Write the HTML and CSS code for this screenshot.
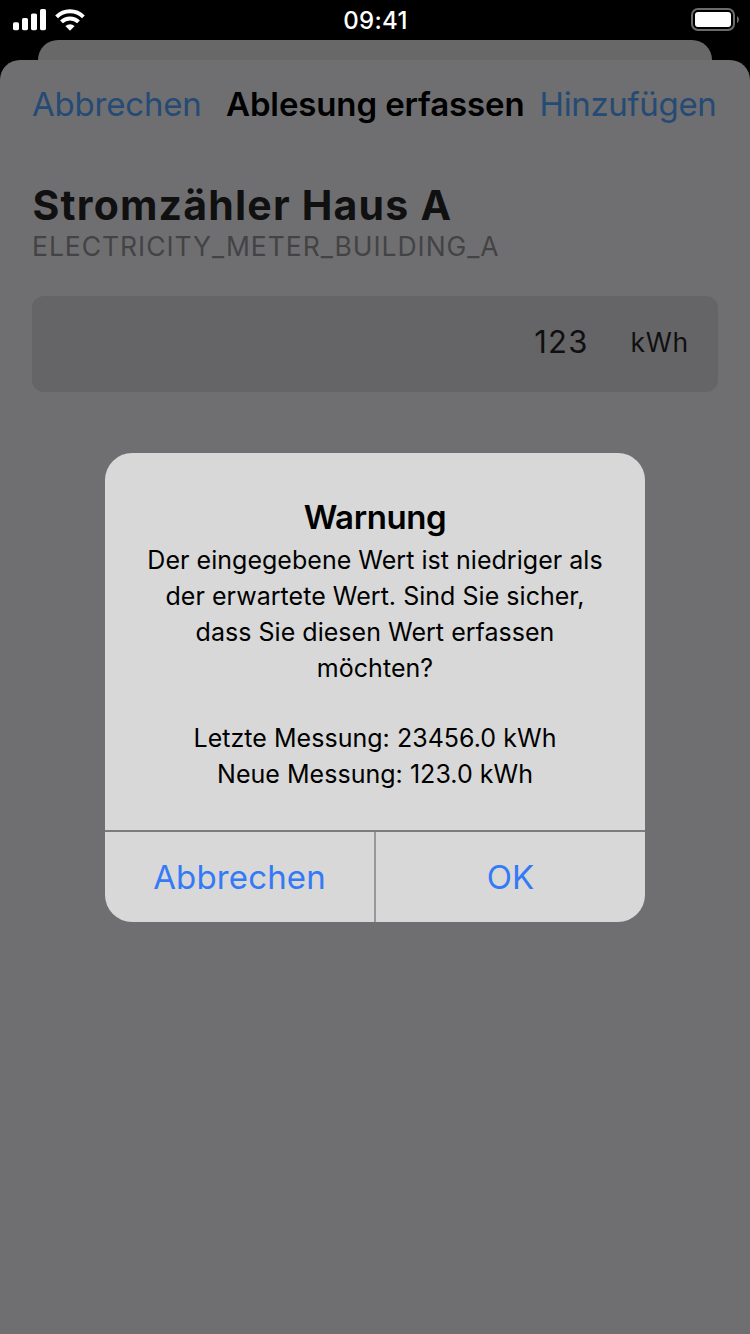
FILE: index.html
```html
<!DOCTYPE html>
<html lang="de">
<head>
<meta charset="utf-8">
<title>Ablesung erfassen</title>
<link rel="stylesheet" href="styles.css">
</head>
<body>
<div class="screen">
  <header class="status">
    <div class="status-left">
      <svg class="signal" width="34" height="22" viewBox="0 0 34 22" fill="#fff">
        <rect x="0" y="13.2" width="6" height="8" rx="1.6"/>
        <rect x="9" y="9" width="6" height="12.2" rx="1.6"/>
        <rect x="18" y="4.4" width="6" height="16.8" rx="1.6"/>
        <rect x="27" y="0" width="6" height="21.2" rx="1.6"/>
      </svg>
      <svg class="wifi" width="30" height="22" viewBox="0 0 30 22" fill="none" stroke="#fff">
        <path d="M1.6 7.8A19 19 0 0 1 28.4 7.8" stroke-width="4"/>
        <path d="M6.500 12.900A12.200 12.200 0 0 1 23.500 12.900" stroke-width="4"/>
        <path d="M15 21.800L10.400 17.100Q15 13.200 19.600 17.100Z" fill="#fff" stroke="none"/>
      </svg>
    </div>
    <div class="clock">09:41</div>
    <div class="status-right">
      <svg width="49" height="24" viewBox="0 0 49 24">
        <rect x="1" y="1" width="42" height="21" rx="6" fill="none" stroke="#6b6b6b" stroke-width="2"/>
        <rect x="4" y="4" width="36" height="15" rx="3" fill="#fff"/>
        <path d="M46 8Q48 9.200 48 11.500Q48 13.800 46 15Z" fill="#6b6b6b"/>
      </svg>
    </div>
  </header>
  <div class="back-sheet"></div>
  <main class="sheet">
    <nav class="nav">
      <span class="link cancel">Abbrechen</span>
      <span class="nav-title">Ablesung erfassen</span>
      <span class="link add">Hinzufügen</span>
    </nav>
    <h1 class="meter-name">Stromzähler Haus A</h1>
    <p class="meter-id">ELECTRICITY_METER_BUILDING_A</p>
    <div class="field">
      <span class="value">123</span>
      <span class="unit">kWh</span>
    </div>
  </main>
  <section class="alert">
    <div class="alert-body">
      <h2 class="alert-title">Warnung</h2>
      <p class="line l1">Der eingegebene Wert ist niedriger als</p>
      <p class="line l2">der erwartete Wert. Sind Sie sicher,</p>
      <p class="line l3">dass Sie diesen Wert erfassen</p>
      <p class="line l4">möchten?</p>
      <p class="line l5">Letzte Messung: 23456.0 kWh</p>
      <p class="line l6">Neue Messung: 123.0 kWh</p>
    </div>
    <div class="actions">
      <span class="action">Abbrechen</span>
      <span class="action ok">OK</span>
    </div>
  </section>
</div>
</body>
</html>
```
FILE: styles.css
```css
* { box-sizing: border-box; }
body { margin: 0; background: #000; font-family: Inter, "Liberation Sans", sans-serif; font-weight: 370; }
h1, h2, p { margin: 0; white-space: nowrap; }
.screen { position: relative; width: 750px; height: 1334px; overflow: hidden; display: flex; flex-direction: column; background: #000; }
.status { height: 40px; flex: none; display: grid; grid-template-columns: 1fr auto 1fr; padding: 0 10px 0 13px; color: #fff; }
.status-left { display: flex; gap: 8.5px; padding-top: 9px; }
.wifi { margin-left: -0.5px; }
.status-right { display: flex; justify-content: flex-end; padding-top: 8px; }
.clock { font-size: 24px; font-weight: 500; line-height: 41px; letter-spacing: 0.3px; margin-left: -2px; }
.back-sheet { height: 20px; flex: none; margin: 0 38px; background: #686868; border-radius: 20px 20px 0 0; }
.sheet { flex: 1; background: #6f6f71; border-radius: 20px 20px 0 0; padding: 22px 32px 0; }
.nav { display: flex; height: 44px; line-height: 44px; font-size: 33px; white-space: nowrap; }
.link { color: #254a74; }
.cancel { width: 194px; letter-spacing: -0.2px; }
.nav-title { width: 313.5px; font-weight: 570; letter-spacing: -0.12px; color: #000; }
.add { letter-spacing: -0.35px; }
.meter-name { margin-top: 54px; padding-left: 0.5px; font-size: 41px; line-height: 50px; font-weight: 680; letter-spacing: 1.2px; color: #101011; }
.meter-id { font-size: 26.5px; line-height: 33px; letter-spacing: 0.95px; color: #434345; }
.field { margin-top: 33px; height: 96px; padding: 0 30px 5px; display: flex; align-items: center; justify-content: flex-end; gap: 42px; border-radius: 12px; background: #656567; color: #101011; }
.value { font-size: 31px; letter-spacing: 1.2px; }
.unit { font-size: 26.5px; letter-spacing: 0.7px; margin-right: -1px; }
.alert { position: absolute; left: 105px; top: 452.5px; width: 540px; height: 469px; border-radius: 27px; background: #d8d8d8; overflow: hidden; display: flex; flex-direction: column; }
.alert-body { flex: 1; padding-top: 44px; text-align: center; color: #000; }
.alert-title { font-size: 33px; line-height: 40px; font-weight: 570; letter-spacing: -0.4px; margin-bottom: 5px; }
.line { font-size: 25px; line-height: 36px; letter-spacing: 0.03px; }
.l5 { margin-top: 34px; }
.actions { height: 91.5px; flex: none; display: grid; grid-template-columns: 269px 271px; border-top: 2px solid #7c7c7e; text-align: center; font-size: 33px; line-height: 90px; letter-spacing: 0.15px; color: #347af6; }
.ok { border-left: 2px solid #98989a; }
```
